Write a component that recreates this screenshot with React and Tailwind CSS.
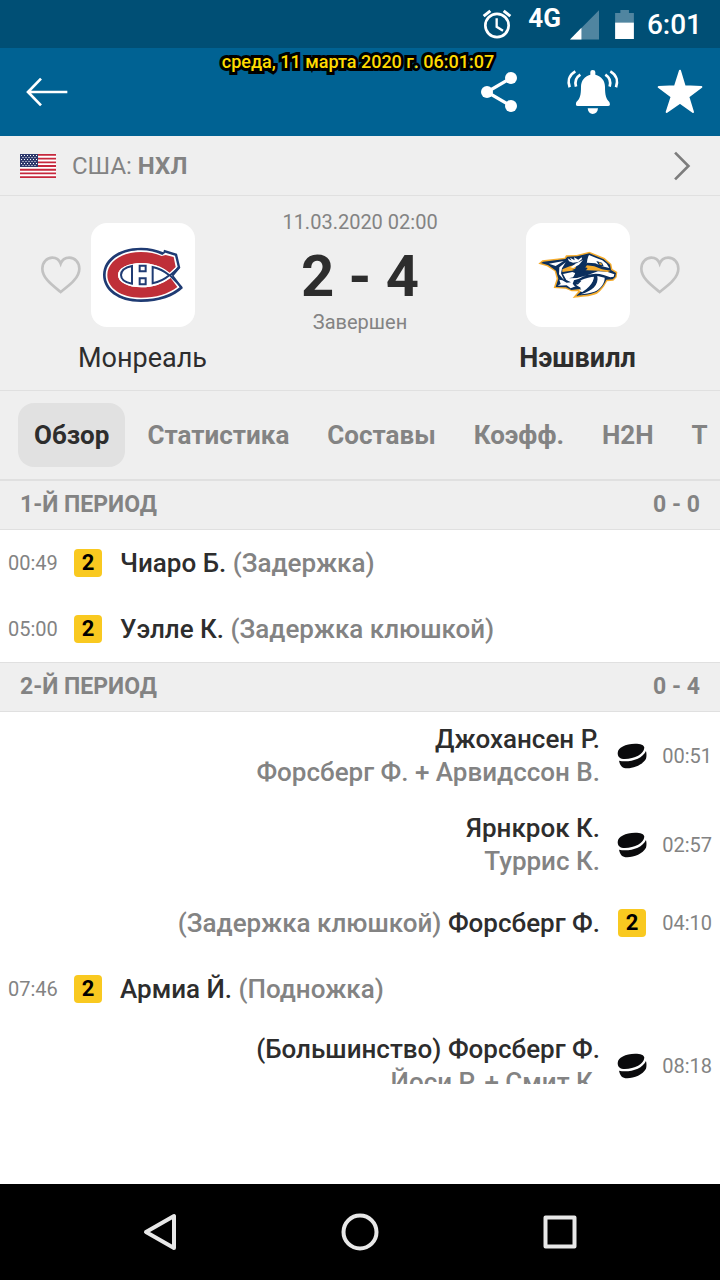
import React, { useState } from 'react'

const tabs = ['Обзор', 'Статистика', 'Составы', 'Коэфф.', 'H2H', 'Т']

const periods = [
  {
    title: '1-Й ПЕРИОД',
    score: '0 - 0',
    events: [
      { time: '00:49', side: 'home', type: 'penalty', player: 'Чиаро Б.', note: '(Задержка)' },
      { time: '05:00', side: 'home', type: 'penalty', player: 'Уэлле К.', note: '(Задержка клюшкой)' },
    ]
  },
  {
    title: '2-Й ПЕРИОД',
    score: '0 - 4',
    events: [
      { time: '00:51', side: 'away', type: 'goal', player: 'Джохансен Р.', assist: 'Форсберг Ф. + Арвидссон В.' },
      { time: '02:57', side: 'away', type: 'goal', player: 'Ярнкрок К.', assist: 'Туррис К.' },
      { time: '04:10', side: 'away', type: 'penalty', player: 'Форсберг Ф.', note: '(Задержка клюшкой)' },
      { time: '07:46', side: 'home', type: 'penalty', player: 'Армиа Й.', note: '(Подножка)' },
      { time: '08:18', side: 'away', type: 'goal', player: '(Большинство) Форсберг Ф.', assist: 'Йоси Р. + Смит К.' },
    ]
  }
]

const Montreal = () => (
  <svg viewBox='210 69 312 312' className='w-[104px] h-[104px]'>
    <path fill='#1f3b73' d='M427 157L429 149L468 161L478 203L458 227L486 264C460 290 415 306 360 306C290 306 246 270 246 225C246 178 292 143 360 143C385 143 408 149 427 157Z' />
    <path fill='#fff' d='M424 165L433 158L462 167L470 200L450 224L476 262C450 284 410 298 360 298C296 298 254 266 254 225C254 184 298 151 360 151C384 151 405 157 424 165Z' />
    <path fill='#bf2f38' d='M422 168L434 165L458 171L464 201L445 219C425 202 395 189 362 189C320 189 291 205 291 225C291 246 320 262 362 262C395 262 425 252 449 234L469 261C442 282 405 293 360 293C300 293 259 264 259 225C259 187 300 156 360 156C385 156 403 160 422 168Z' />
    <path fill='#fff' d='M291 225C291 205 320 189 362 189C400 189 430 205 448 220L454 227L447 234C425 252 395 262 362 262C320 262 291 246 291 225Z' />
    <path fill='none' stroke='#1f3b73' strokeWidth='6' d='M333 198C310 203 300 213 300 225C300 237 310 247 333 251ZM395 201C415 205 432 215 445 226C432 237 415 246 395 250ZM356 197H374V214H356ZM356 235H374V253H356Z' />
    <path fill='none' stroke='#1f3b73' strokeWidth='6' d='M474 203L447 226L482 262' />
  </svg>
)

const Nashville = () => (
  <svg viewBox='-21 -63 312 312' className='w-[104px] h-[104px]'>
    <path fill='#f5ac2d' d='M16 59L28 49L95 41L99 34L131 33L169 23L215 42L235 60L238 75L253 84L251 100L241 110L222 112C216 124 208 138 192 149C170 159 145 157 119 162L136 142L116 142L98 134L62 132L71 104L65 82L42 67Z' />
    <path fill='#0b2f5d' d='M24 57L31 53L97 45L103 38L132 37L169 28L212 46L231 62L234 78L249 87L247 98L239 106L220 107C214 120 205 134 190 144C170 153 150 153 130 155L146 140L140 135L115 138L99 130L68 129L76 104L69 80L46 64Z' />
    {/* brow, ear and cheek */}
    <path fill='#fff' d='M48 59L92 51L68 66ZM104 43L116 50L111 41L125 49L123 40L136 47L146 40L147 45L136 54L120 56L108 52ZM168 33L190 42L208 49L221 59L229 72L207 67L187 58L163 56L152 65ZM79 70L98 55L87 73L84 88L93 108L78 91ZM90 90L118 84L128 88L120 100L108 103L132 102L162 94L195 82L222 83L244 91L242 98L232 100L212 93C184 84 158 93 138 104L123 109L119 120L128 127L113 133L101 124L74 125L83 120L79 107L88 109L101 116L114 115L100 108Z' />
    <path fill='#f5ac2d' d='M88 76L112 66L130 63L126 79L88 84ZM162 64L184 67L207 76L233 80L224 84L198 80L162 79L150 79Z' />
    <path fill='#0b2f5d' d='M190 51L207 56L212 67L199 66ZM157 40L165 34L161 61L151 68L164 72L150 91L151 80L139 90L142 79L124 96L128 82L117 78L139 70Z' />
    <path fill='#fff' d='M112 70L130 58L150 48L138 62L121 72Z' />
    <path fill='#f5ac2d' d='M198 55L207 59L206 64L199 61Z' />
    {/* open mouth and the tusk */}
    <path fill='#fff' d='M133 117L145 108C158 102 173 98 185 98C183 117 166 136 149 146L138 138L145 136L129 124Z' />
    <path fill='none' stroke='#0b2f5d' strokeWidth='4' d='M124 111L141 112L134 119L122 117M123 122L142 133' />
    <path fill='#0b2f5d' d='M183 96L191 96C195 119 174 144 129 156C162 137 183 119 183 96Z' />
    <path fill='#fff' d='M193 96L215 101C216 116 203 136 184 143C171 148 155 149 143 151C177 141 198 124 193 96Z' />
  </svg>
)

const Heart = () => (
  <button aria-label='Избранное' className='w-10 h-10 flex items-center justify-center'>
    <svg viewBox='60 168 120 118' className='w-10 h-10' fill='none' stroke='#c2c2c2' strokeWidth='8'>
      <path d='M119 278C100 262 64 238 64 208C64 189 77 175 94 175C106 175 115 182 119 193C123 182 133 175 145 175C162 175 175 189 175 208C175 238 139 262 119 278Z' />
    </svg>
  </button>
)

const Puck = () => (
  <svg viewBox='82 70 88 76' className='w-[30px] h-[26px] shrink-0' fill='#0a0a0c'>
    <path d='M84 99C84 84 107 72 135 72C151 72 162 76 162 84C162 102 133 117 105 117C91 117 84 111 84 99Z' />
    <path d='M88 122C120 128 157 116 167 93C169 101 169 109 167 116C158 133 133 144 112 144C97 144 91 137 88 122Z' />
  </svg>
)

const Flag = () => (
  <svg viewBox='0 0 36 24' className='w-9 h-6'>
    <rect width='36' height='24' fill='#fff' />
    <path stroke='#c6283d' strokeWidth='1.85' d='M0 .92H36M0 4.6H36M0 8.3H36M0 12H36M0 15.7H36M0 19.4H36M0 23.1H36' />
    <rect width='18' height='13' fill='#2f3a6d' />
    <path stroke='#fff' strokeWidth='1' strokeDasharray='1 2' d='M1 1.5H17M2.5 3.5H17M1 5.5H17M2.5 7.5H17M1 9.5H17M2.5 11.5H17' />
  </svg>
)

const Event = ({ event }) => {
  const away = event.side === 'away'
  return (
    <li className={`flex items-center gap-4 px-2 ${event.assist ? 'min-h-[88px] mb-px' : 'min-h-[66px]'} ${away ? 'flex-row-reverse text-right' : ''}`}>
      <span className='w-[50px] text-[20px] text-[#838383] whitespace-nowrap'>{event.time}</span>
      {event.type === 'goal'
        ? <span className='w-7 flex justify-center'><Puck /></span>
        : <span className='w-7 h-7 rounded-sm bg-[#f9c920] text-black text-[22px] leading-7 font-bold text-center'>2</span>}
      <div className='flex-1 px-[2px] text-[26px] leading-[33px] font-medium text-[#838383] whitespace-nowrap'>
        {away && event.note && <span>{event.note} </span>}
        <span className='text-[#2d2d2d]'>{event.player}</span>
        {!away && event.note && <span> {event.note}</span>}
        {event.assist && <p>{event.assist}</p>}
      </div>
    </li>
  )
}

const Team = ({ name, logo, away }) => (
  <div className='w-[285px] shrink-0 pt-[27px]'>
    <div className={`flex items-center justify-center gap-[10px] ${away ? 'flex-row-reverse' : ''}`}>
      <Heart />
      <div className='w-[104px] h-[104px] rounded-2xl bg-white'>{logo}</div>
      <div className='w-10'></div>
    </div>
    <p className={`mt-[14px] text-[27px] leading-[34px] text-center text-[#2d2d2d] ${away ? 'font-bold' : ''}`}>{name}</p>
  </div>
)

const App = () => {
  const [active, setActive] = useState(0)

  return (
    <div className="h-screen relative flex flex-col overflow-hidden bg-white font-['Roboto',sans-serif]">
      <div className='h-12 shrink-0 flex items-center justify-end pr-[18px] bg-[#004f75] text-white'>
        <svg viewBox='60 26 90 92' className='w-[30px] h-[31px]' fill='none' stroke='#fff'>
          <circle cx='105' cy='75' r='35' strokeWidth='8' />
          <path strokeWidth='7' d='M104 53V79L123 91' />
          <path strokeWidth='9' d='M65 47L85 31M145 47L125 31' />
        </svg>
        <span className='ml-4 self-start mt-1 text-[26px] leading-7 font-bold'>4G</span>
        <svg viewBox='332 32 86 88' className='ml-[9px] mt-[2px] w-[29px] h-[30px]'>
          <path fill='#5085a0' d='M418 32V119H332Z' />
          <path fill='#fff' d='M366 84V119H332Z' />
        </svg>
        <svg viewBox='468 26 57 88' className='ml-4 w-[19px] h-[29px]'>
          <path fill='#5085a0' d='M484 26H510V35H525V64H468V35H484Z' />
          <path fill='#fff' d='M468 64H525V114H468Z' />
        </svg>
        <span className='ml-[13px] pt-[2px] text-[28px] leading-9 font-medium'>6:01</span>
      </div>

      <div className='h-[88px] shrink-0 flex items-center justify-between pl-[25px] pr-4 bg-[#006293]'>
        <button aria-label='Назад'>
          <svg viewBox='75 108 135 96' className='w-[45px] h-8' fill='none' stroke='#fff' strokeWidth='8'>
            <path d='M123 116L84 156L123 196M84 156H202' />
          </svg>
        </button>
        <div className='flex items-center'>
          <button aria-label='Поделиться'>
            <svg viewBox='57 210 120 132' className='w-10 h-11' fill='#fff'>
              <path fill='none' stroke='#fff' strokeWidth='10' d='M153 234L81 276L153 318' />
              <circle cx='153' cy='234' r='18' />
              <circle cx='81' cy='276' r='18' />
              <circle cx='153' cy='318' r='18' />
            </svg>
          </button>
          <button aria-label='Уведомления' className='ml-[47px]'>
            <svg viewBox='318 204 162 144' className='w-[54px] h-12' fill='#fff'>
              <path d='M391 224V216Q391 210 398 210Q406 210 406 216V224C425 228 435 243 435 260C435 285 438 296 448 306Q453 318 444 318H353Q345 318 349 306C360 296 363 285 363 260C363 243 373 228 391 224Z' />
              <path d='M383 325H414C413 336 407 342 398 342C390 342 384 336 383 325Z' />
              <path fill='none' stroke='#fff' strokeWidth='8' d='M346 214C325 226 323 246 329 262M361 224C347 233 344 246 348 260M451 214C472 226 474 246 468 262M436 224C450 233 453 246 449 260' />
            </svg>
          </button>
          <button aria-label='В избранное' className='ml-9'>
            <svg viewBox='588 206 144 144' className='w-12 h-12' fill='#fff' stroke='#fff' strokeWidth='6' strokeLinejoin='round'>
              <path d='M660 214L674 261L724 263L685 292L699 338L660 310L620 338L635 292L596 263L645 261Z' />
            </svg>
          </button>
        </div>
      </div>

      <p className='absolute top-[50px] inset-x-0 text-center pr-1 text-[18px] leading-6 font-medium text-[#ffdb00] [-webkit-text-stroke:6px_black] [paint-order:stroke_fill]'>
        среда, 11 марта 2020 г. 06:01:07
      </p>

      <a href='#league' className='h-[60px] shrink-0 flex items-center px-5 bg-[#efefef] border-b border-[#e0e0e0] text-[24px] text-[#838383]'>
        <Flag />
        <span className='ml-4 flex-1'>США: <b>НХЛ</b></span>
        <svg viewBox='0 0 36 60' className='w-5 h-8 mr-2' fill='none' stroke='#7d7d7d' strokeWidth='5'>
          <path d='M5 5L30 30L5 55' />
        </svg>
      </a>

      <div className='h-[195px] shrink-0 flex justify-between bg-[#efefef] border-b border-[#e0e0e0]'>
        <Team name='Монреаль' logo={<Montreal />} />
        <div className='flex-1 min-w-0 pt-3 flex flex-col items-center text-[#838383] text-[20px] leading-7 whitespace-nowrap'>
          <p>11.03.2020 02:00</p>
          <p className='mt-2 text-[58px] leading-[64px] font-bold text-[#2d2d2d]'>2 - 4</p>
          <p>Завершен</p>
        </div>
        <Team name='Нэшвилл' logo={<Nashville />} away />
      </div>

      <nav className='h-[90px] shrink-0 flex items-center gap-[6px] pl-[18px] overflow-hidden bg-[#efefef] border-b-2 border-[#e0e0e0]'>
        {tabs.map((tab, idx) => (
          <button key={tab} onClick={() => setActive(idx)} className={`h-16 shrink-0 px-4 rounded-2xl text-[26px] font-bold ${active === idx ? 'bg-[#e1e1e1] text-[#2d2d2d]' : 'text-[#838383]'}`}>
            {tab}
          </button>
        ))}
      </nav>

      <main className='flex-1 min-h-0 overflow-hidden'>
        {periods.map((period, idx) => (
          <section key={period.title}>
            <h2 className={`flex items-center justify-between px-5 bg-[#efefef] border-b border-[#e0e0e0] text-[23px] font-bold text-[#838383] ${idx > 0 ? 'h-[50px] border-t' : 'h-[49px]'}`}>
              <span>{period.title}</span>
              <span>{period.score}</span>
            </h2>
            <ul>
              {period.events.map((e) => <Event key={e.time} event={e} />)}
            </ul>
          </section>
        ))}
      </main>

      <div className='h-[100px] shrink-0 bg-white'></div>

      <footer className='h-24 shrink-0 flex items-center justify-center gap-40 bg-black'>
        <button aria-label='Назад'>
          <svg viewBox='0 0 40 40' className='w-10 h-10' fill='none' stroke='#e8e8e8' strokeWidth='4' strokeLinejoin='round'>
            <path d='M34 4V36L6 20Z' />
          </svg>
        </button>
        <button aria-label='Домой'>
          <svg viewBox='0 0 40 40' className='w-10 h-10' fill='none' stroke='#e8e8e8' strokeWidth='4'>
            <circle cx='20' cy='20' r='16.5' />
          </svg>
        </button>
        <button aria-label='Недавние'>
          <svg viewBox='0 0 40 40' className='w-10 h-10' fill='none' stroke='#e8e8e8' strokeWidth='4' strokeLinejoin='round'>
            <path d='M5.500 5.500H34.500V34.500H5.500Z' />
          </svg>
        </button>
      </footer>
    </div>
  )
}

export default App
